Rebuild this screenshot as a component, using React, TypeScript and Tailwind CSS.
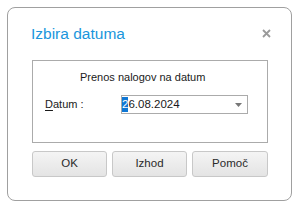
export default function App() {
  return (
    <div className="w-[299px] h-[209px] bg-white pt-[7px] pl-[7px] font-['Liberation_Sans',Arial,sans-serif]">
      <div className="w-[285px] h-[194px] border border-[#a0a0a0] rounded-[8px] bg-white flex flex-col">
        <div className="flex items-start justify-between pl-[23px] pr-[20px] pt-[16px] h-[52px]">
          <div className="text-[15.5px] leading-[20px] font-normal text-[#1a96dc]">Izbira datuma</div>
          <div className="mt-[5px]">
            <svg width="9" height="9" viewBox="0 0 9 9">
              <path d="M1 1 L8 8 M8 1 L1 8" stroke="#9a9a9a" strokeWidth="1.8" />
            </svg>
          </div>
        </div>
        <div className="ml-[24px] w-[236px] h-[83px] border border-[#ababab] flex flex-col">
          <div className="pl-[47px] pt-[10px] text-[11px] leading-[13px] font-normal text-[#1a1a1a]">Prenos nalogov na datum</div>
          <div className="flex items-center mt-[11px] pl-[12px]">
            <div className="w-[76px] text-[11px] leading-[13px] font-normal text-[#1a1a1a]"><span className="underline underline-offset-[2px]">D</span>atum :</div>
            <div className="w-[127px] h-[19px] border border-[#ababab] flex items-center justify-between pr-[5px]">
              <div className="text-[11.5px] font-normal text-[#1a1a1a] flex">
                <span className="bg-[#0f77d4] text-white leading-[15px]">2</span>
                <span className="leading-[15px]">6.08.2024</span>
              </div>
              <svg width="7" height="4" viewBox="0 0 7 4">
                <path d="M0 0 L7 0 L3.5 4 Z" fill="#777" />
              </svg>
            </div>
          </div>
        </div>
        <div className="ml-[24px] mt-[8px] w-[236px] grid grid-cols-[75px_75px_76px] gap-x-[5px]">
          {["OK", "Izhod", "Pomoč"].map((t) => (
            <div
              key={t}
              className="h-[26px] rounded-[3px] border border-[#c8c8c8] bg-gradient-to-b from-[#f4f4f4] to-[#e4e4e4] text-[11.5px] font-normal text-[#2a2a2a] flex items-center justify-center"
            >
              {t}
            </div>
          ))}
        </div>
      </div>
    </div>
  );
}
